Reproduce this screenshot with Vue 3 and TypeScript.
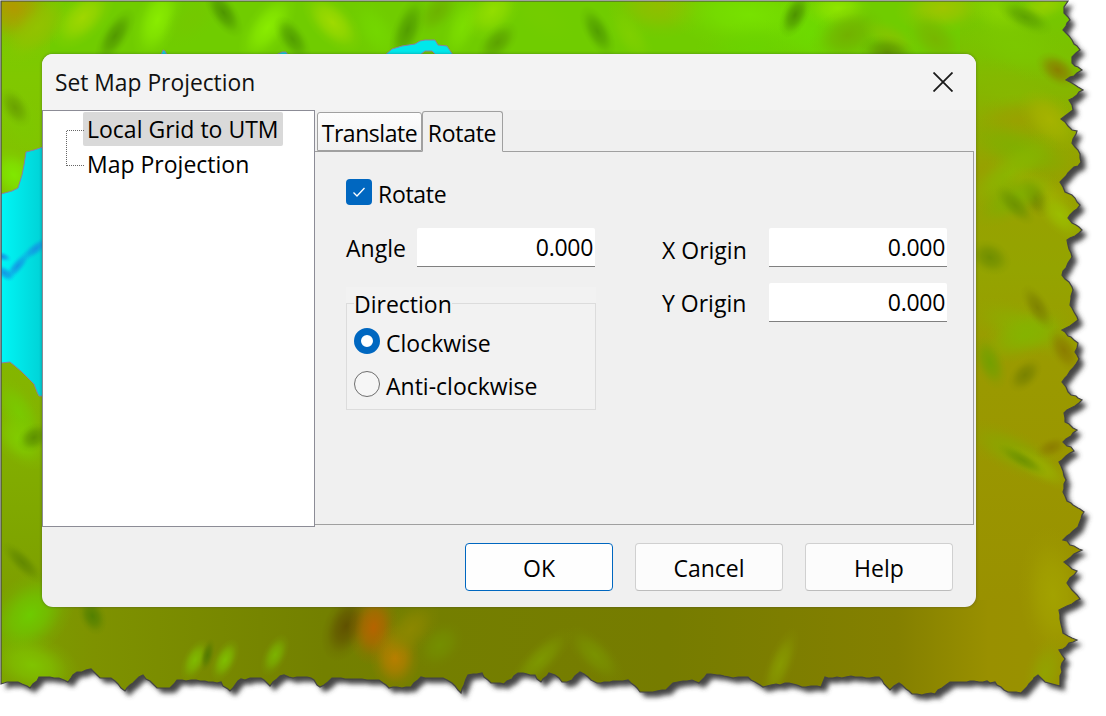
<script setup lang="ts">
import { computed } from 'vue'

type Pt = [number, number]

const right: Pt[] = [[1068,1],[1064,7],[1064,13],[1070,20],[1063,30],[1072,40],[1080,50],[1072,57],[1072,63],[1082,70],[1066,80],[1083,90],[1069,100],[1073,110],[1061,119],[1072,130],[1077,131],[1072,143],[1078,150],[1081,162],[1068,173],[1060,182],[1065,192],[1072,195],[1080,205],[1068,218],[1072,223],[1082,230],[1067,240],[1072,257],[1062,275],[1072,287],[1073,290],[1070,305],[1078,320],[1062,330],[1078,343],[1075,352],[1079,359],[1073,368],[1062,382],[1068,392],[1082,400],[1064,413],[1065,422],[1077,430],[1063,442],[1074,451],[1059,462],[1066,480],[1063,492],[1067,501],[1084,512],[1078,527],[1063,540],[1082,550],[1064,562],[1077,571],[1067,583],[1080,599],[1059,610],[1063,633],[1077,640],[1059,650],[1065,659],[1062,663],[1060,686]]
const bottom: Pt[] = [[1045,682],[1038,675],[1021,693],[1008,692],[995,682],[950,682],[935,694],[912,694],[899,683],[890,690],[879,677],[825,677],[821,687],[802,687],[789,683],[763,687],[748,677],[729,677],[707,674],[699,683],[692,680],[673,683],[666,690],[640,692],[628,680],[617,681],[597,683],[591,680],[580,672],[572,680],[562,682],[555,675],[549,673],[541,682],[535,675],[518,673],[504,684],[491,683],[482,673],[468,675],[461,693],[452,683],[443,678],[421,677],[411,687],[389,688],[379,680],[332,678],[320,687],[311,678],[280,676],[270,686],[261,678],[241,679],[230,691],[221,682],[200,681],[177,680],[170,688],[157,688],[143,675],[125,691],[111,678],[100,678],[91,669],[77,672],[68,682],[59,678],[39,677],[30,688],[18,682],[7,682],[1,684]]

function roughen(points: Pt[]): Pt[] {
  const out: Pt[] = []
  let seed = 17
  const rnd = () => {
    seed = (seed * 9301 + 49297) % 233280
    return seed / 233280
  }
  for (let i = 0; i < points.length - 1; i++) {
    const [ax, ay] = points[i]
    const [bx, by] = points[i + 1]
    const steps = Math.max(1, Math.floor(Math.hypot(bx - ax, by - ay) / 4))
    out.push([ax, ay])
    for (let s = 1; s < steps; s++) {
      const t = s / steps
      out.push([Math.round(ax + (bx - ax) * t + (rnd() - 0.5) * 1.6), Math.round(ay + (by - ay) * t + (rnd() - 0.5) * 1.6)])
    }
  }
  out.push(points[points.length - 1])
  return out
}

const outline = computed<Pt[]>(() => [[1, 1] as Pt, ...roughen(right), ...roughen(bottom)])
const edge = computed(() => outline.value.map((p) => p.join(',')).join(' '))
const tornClip = computed(() => `polygon(${outline.value.map((p) => `${p[0]}px ${p[1]}px`).join(', ')})`)

type Streak = [number, number, number, number, number, string]
const streaks: Streak[] = [
  [0,0,25,14,24,'#b89400'],[20,45,55,10,14,'#92c400'],[70,30,95,5,13,'#a4d800'],[105,52,125,20,8,'#4f9400'],
  [150,40,165,0,13,'#8cf000'],[180,30,205,8,12,'#74c800'],[215,0,232,25,8,'#4a9000'],[255,45,280,10,12,'#8cf000'],
  [285,28,300,50,8,'#4f9a00'],[320,10,345,35,12,'#a4dc00'],[368,18,385,45,12,'#74d800'],[400,50,415,10,9,'#4f9800'],
  [430,20,445,2,10,'#6cb000'],[455,45,470,8,10,'#7ee000'],[485,18,500,4,14,'#96e000'],[490,50,505,35,9,'#5a9e00'],
  [530,8,555,25,13,'#74cc00'],[590,18,605,45,8,'#4f9a00'],[640,5,680,5,20,'#94bc00'],[620,20,640,50,10,'#80d000'],
  [700,10,800,20,22,'#78e400'],[720,50,790,45,16,'#6ad400'],[800,30,830,40,22,'#6cdc00'],[800,5,790,25,8,'#4a8c00'],
  [825,8,850,8,13,'#92e800'],[835,40,860,30,16,'#72ae00'],[875,30,905,45,9,'#86c400'],[920,10,965,6,15,'#a4c400'],
  [875,50,900,54,10,'#5e8e00'],[925,30,945,48,13,'#78b400'],
  [985,5,1010,20,14,'#8ad400'],[1030,10,1060,0,10,'#98d000'],[1040,25,1010,10,8,'#5a9e00'],[990,35,1040,55,18,'#7cc800'],
  [980,75,1060,115,16,'#86b800'],[1050,65,1065,75,9,'#8a7a00'],[990,125,1050,115,16,'#9aa000'],[1040,110,1060,130,14,'#a8b400'],
  [980,135,1060,165,15,'#7eb000'],[1040,150,980,195,13,'#88b800'],[1020,180,1060,200,11,'#a0b000'],[1030,190,1040,205,8,'#6c7c00'],
  [990,210,1040,185,13,'#7cb000'],[1005,195,1025,215,7,'#6c9000'],[1050,205,1070,225,10,'#9cc000'],[985,255,995,260,10,'#6c8c00'],
  [990,315,1060,340,14,'#8ab000'],[1000,345,1050,325,14,'#84b400'],[1030,295,1045,320,7,'#7c8000'],[1020,380,1030,370,8,'#768000'],
  [985,350,995,375,9,'#70a000'],[1058,340,1070,360,8,'#8a7a00'],
  [980,435,1050,470,13,'#88a800'],[1020,455,1060,480,8,'#9ab000'],[1005,450,1040,470,5,'#6c9000'],[1045,450,1058,445,6,'#8a7c00'],
  [1056,630,1050,560,20,'#a4a400'],[1040,690,1050,655,12,'#92a400'],[770,690,790,640,8,'#889c00'],
  [520,680,560,640,9,'#7e9a00'],[610,670,580,640,10,'#7a9400'],[40,605,20,625,22,'#6cd000'],[15,660,50,670,18,'#80c800'],[90,610,95,622,8,'#4e7e00'],
  [190,670,200,650,7,'#80c000'],[220,670,230,650,7,'#80c400'],[205,665,210,645,4,'#4f7800'],[270,665,280,645,7,'#7cb800'],
  [352,612,340,640,13,'#5e4c00'],[375,615,372,640,15,'#bd6000'],[395,665,395,650,15,'#c07e00'],[400,640,420,620,13,'#8e8800'],[435,650,445,640,12,'#749000'],
  [15,110,30,135,14,'#7ec800'],[10,170,18,180,14,'#80ec00'],[8,395,30,430,12,'#78cc00'],[10,430,30,450,13,'#80d000'],[30,440,38,435,8,'#5a8c00'],[10,550,35,575,6,'#608600'],[10,100,20,115,8,'#689e00'],
]
const streamPieces: Streak[] = [
  [46,241,26,256,4,'#1490e4'],[26,256,9,276,4,'#1490e4'],[9,276,0,270,4,'#1490e4'],[-2,255,7,258,3,'#1490e4'],
]

function soften(list: Streak[], prefix: string) {
  return list.map((s, i) => {
    const [x1, y1, x2, y2, w, color] = s
    const pad = w * 1.7
    return {
      id: `${prefix}${i}`,
      color,
      cx: (x1 + x2) / 2,
      cy: (y1 + y2) / 2,
      rx: Math.hypot(x2 - x1, y2 - y1) / 2 + pad,
      ry: pad,
      angle: (Math.atan2(y2 - y1, x2 - x1) * 180) / Math.PI,
    }
  })
}
const blobs = soften(streaks, 'relief')
const streamBlobs = soften(streamPieces, 'stream')
</script>

<template>
  <div class="page">
    <svg class="map" width="1106" height="716" viewBox="0 0 1106 716" aria-hidden="true">
      <defs>
        <filter id="shade" x="-5%" y="-5%" width="110%" height="110%"><feGaussianBlur stdDeviation="2.4" /></filter>
      </defs>
      <polygon class="tear-shadow" :points="edge" filter="url(#shade)" />
    </svg>

    <div class="terrain" :style="{ clipPath: tornClip }">
      <svg class="layer" width="1106" height="716" viewBox="0 0 1106 716" aria-hidden="true">
        <defs>
          <linearGradient id="eastern" x1="0" y1="0" x2="0" y2="1">
            <stop offset="0" stop-color="#70cc00" /><stop offset="0.12" stop-color="#7cc000" /><stop offset="0.2" stop-color="#8ab000" />
            <stop offset="0.3" stop-color="#98a000" /><stop offset="0.45" stop-color="#94a400" />
            <stop offset="0.6" stop-color="#9a9a00" /><stop offset="1" stop-color="#999000" />
          </linearGradient>
          <linearGradient id="southern" x1="0" y1="0" x2="1" y2="0">
            <stop offset="0" stop-color="#7ca400" /><stop offset="0.1" stop-color="#7e9200" />
            <stop offset="0.3" stop-color="#738000" /><stop offset="0.6" stop-color="#767c00" />
            <stop offset="0.8" stop-color="#848000" /><stop offset="0.88" stop-color="#999000" /><stop offset="1" stop-color="#999400" />
          </linearGradient>
          <linearGradient id="western" x1="0" y1="0" x2="0" y2="1">
            <stop offset="0" stop-color="#70cc00" /><stop offset="0.15" stop-color="#80c800" /><stop offset="0.65" stop-color="#84b400" />
            <stop offset="1" stop-color="#7c9c00" />
          </linearGradient>
          <radialGradient v-for="b in [...blobs, ...streamBlobs]" :id="b.id" :key="b.id">
            <stop offset="0" :stop-color="b.color" stop-opacity="0.9" />
            <stop offset="0.4" :stop-color="b.color" stop-opacity="0.6" />
            <stop offset="0.75" :stop-color="b.color" stop-opacity="0.15" />
            <stop offset="1" :stop-color="b.color" stop-opacity="0" />
          </radialGradient>
          <linearGradient id="lake-fill" x1="0" y1="0" x2="1" y2="0">
            <stop offset="0" stop-color="#00f6f6" /><stop offset="1" stop-color="#00d2d6" />
          </linearGradient>
        </defs>
        <rect x="-20" y="-20" width="1146" height="86" fill="#70cc00" />
        <rect x="-20" y="-20" width="70" height="640" fill="url(#western)" />
        <rect x="960" y="-20" width="160" height="640" fill="url(#eastern)" />
        <rect x="-20" y="600" width="1146" height="136" fill="url(#southern)" />
        <ellipse
          v-for="b in blobs"
          :key="b.id"
          :cx="b.cx"
          :cy="b.cy"
          :rx="b.rx"
          :ry="b.ry"
          :fill="`url(#${b.id})`"
          :transform="`rotate(${b.angle} ${b.cx} ${b.cy})`"
        />
        <polygon class="lake" fill="url(#lake-fill)" points="43,147 34,150 26,152 24,165 22,175 18,188 12,191 1,194 1,363 10,362 15,366 22,372 28,378 34,384 37,392 39,396 43,396" />
        <polygon class="lake" fill="#00e8ea" points="385,55 392,49 402,46 415,44 420,41 425,40 435,40 438,45 447,46 453,55" />
        <polygon class="lake" fill="#6fc400" points="420,55 425,51 432,51 436,55" />
        <polygon class="lake" fill="#00d8dc" points="161,55 163,50 165,51 167,55" />
        <polygon class="lake" fill="#00d8dc" points="276,55 282,52 286,52 288,55" />
        <ellipse
          v-for="b in streamBlobs"
          :key="b.id"
          :cx="b.cx"
          :cy="b.cy"
          :rx="b.rx"
          :ry="b.ry"
          :fill="`url(#${b.id})`"
          :transform="`rotate(${b.angle} ${b.cx} ${b.cy})`"
        />
      </svg>
    </div>

    <svg class="map" width="1106" height="716" viewBox="0 0 1106 716" aria-hidden="true">
      <polygon class="tear-line" :points="edge" />
    </svg>

    <section class="dialog">
      <header class="titlebar">
        <span class="title">Set Map Projection</span>
        <svg class="close" width="20" height="20" viewBox="0 0 20 20" aria-hidden="true">
          <path d="M0.5 0.5 L19.5 19.5 M19.5 0.5 L0.5 19.5" />
        </svg>
      </header>

      <div class="main">
        <aside class="tree">
          <svg class="tree-lines" width="22" height="38" viewBox="0 0 22 38" shape-rendering="crispEdges" aria-hidden="true">
            <path d="M0.5 1.5 H19 M0.5 1.5 V36.5 M0.5 36.5 H19" />
          </svg>
          <div class="node selected">Local Grid to UTM</div>
          <div class="node">Map Projection</div>
        </aside>

        <div class="tabs">
          <div class="tabstrip">
            <div class="tab">Translate</div>
            <div class="tab active">Rotate</div>
          </div>
          <div class="panel">
            <label class="check-row">
              <span class="checkbox">
                <svg width="14" height="12" viewBox="0 0 14 12" aria-hidden="true"><path d="M1.5 6.5 L5 10 L12.5 2" /></svg>
              </span>
              <span class="tight">Rotate</span>
            </label>

            <div class="columns">
              <div class="col-left">
                <div class="field">
                  <span class="lbl angle">Angle</span>
                  <div class="input">0.000</div>
                </div>
                <div class="group">
                  <div class="frame">
                    <div class="legend">Direction</div>
                    <div class="radio-row">
                      <span class="radio on"></span>
                      <span class="radio-text">Clockwise</span>
                    </div>
                    <div class="radio-row second">
                      <span class="radio"></span>
                      <span class="radio-text">Anti-clockwise</span>
                    </div>
                  </div>
                </div>
              </div>

              <div class="col-right">
                <div class="field">
                  <span class="lbl origin x">X Origin</span>
                  <div class="input">0.000</div>
                </div>
                <div class="field">
                  <span class="lbl origin">Y Origin</span>
                  <div class="input">0.000</div>
                </div>
              </div>
            </div>
          </div>
        </div>
      </div>

      <footer class="footer">
        <button class="btn primary">OK</button>
        <button class="btn">Cancel</button>
        <button class="btn">Help</button>
      </footer>
    </section>
  </div>
</template>

<style scoped>
.page {
  position: relative;
  width: 1106px;
  height: 716px;
  overflow: hidden;
  background: #fff;
  font-family: "Open Sans", "Noto Sans", sans-serif;
  font-size: 23px;
  color: #000;
}
.map {
  position: absolute;
  left: 0;
  top: 0;
}
.terrain {
  position: absolute;
  left: 0;
  top: 0;
  width: 1106px;
  height: 716px;
  overflow: hidden;
}
.layer {
  position: absolute;
  left: 0;
  top: 0;
}
.tear-shadow {
  fill: #444;
  transform: translate(5px, 5px);
}
.tear-line {
  fill: none;
  stroke: #454545;
  stroke-width: 1.2;
}
.lake {
  stroke: #8a80a0;
  stroke-width: 1;
}
.dialog {
  position: absolute;
  left: 42px;
  top: 54px;
  width: 934px;
  height: 553px;
  box-sizing: border-box;
  background: #f0f0f0;
  border-radius: 11px;
  box-shadow: 0 0 3px rgba(40, 40, 60, 0.45);
  overflow: hidden;
}
.titlebar {
  height: 56px;
  box-sizing: border-box;
  padding: 0 23px 0 13px;
  background: #f3f3f3;
  display: flex;
  align-items: center;
  justify-content: space-between;
}
.title {
  color: #111;
  font-size: 22.8px;
  padding-top: 1px;
}
.close path {
  fill: none;
  stroke: #1a1a1a;
  stroke-width: 1.8;
}
.main {
  display: flex;
  height: 417px;
}
.tree {
  position: relative;
  width: 273px;
  height: 417px;
  box-sizing: border-box;
  background: #fff;
  border: 1px solid #8c8c96;
  padding: 1px 0 0 40px;
}
.tree-lines {
  position: absolute;
  left: 23px;
  top: 18px;
}
.tree-lines path {
  fill: none;
  stroke: #666;
  stroke-width: 1;
  stroke-dasharray: 1 1;
}
.node {
  width: 200px;
  height: 34px;
  line-height: 34px;
  padding-left: 4px;
  box-sizing: border-box;
  white-space: nowrap;
  margin-bottom: 1px;
}
.selected {
  background: #d9d9d9;
  border-radius: 2px;
}
.tabs {
  width: 659px;
  display: flex;
  flex-direction: column;
}
.tabstrip {
  height: 41px;
  display: flex;
  align-items: flex-end;
  padding-left: 2px;
  position: relative;
  z-index: 1;
}
.tab {
  width: 105px;
  height: 39px;
  box-sizing: border-box;
  border: 1px solid #a0a0a0;
  border-radius: 3px 3px 0 0;
  background: linear-gradient(#fdfdfd, #f1f1f1);
  text-align: center;
  line-height: 41px;
  white-space: nowrap;
  letter-spacing: -0.45px;
}
.tab.active {
  width: 81px;
  height: 41px;
  margin-bottom: -1px;
  background: #f0f0f0;
  border-bottom: 1px solid #f0f0f0;
  line-height: 42px;
  letter-spacing: -0.3px;
  padding-right: 1px;
}
.tight {
  letter-spacing: -0.3px;
  padding-top: 3px;
}
.panel {
  height: 374px;
  box-sizing: border-box;
  border: 1px solid #a0a0a0;
  border-left: 0;
  padding: 27px 0 0 31px;
}
.check-row {
  display: flex;
  align-items: center;
  gap: 6px;
  height: 26px;
}
.checkbox {
  width: 26px;
  height: 26px;
  border-radius: 4px;
  background: #0067c0;
  display: flex;
  align-items: center;
  justify-content: center;
}
.checkbox path {
  fill: none;
  stroke: #fff;
  stroke-width: 1.3;
}
.columns {
  display: flex;
  gap: 66px;
  margin-top: 23px;
}
.col-left {
  width: 250px;
}
.col-right {
  display: flex;
  flex-direction: column;
  gap: 16px;
}
.field {
  display: flex;
  align-items: center;
}
.lbl.angle {
  width: 71px;
  box-sizing: border-box;
}
.lbl.origin {
  width: 107px;
  box-sizing: border-box;
}
.lbl.origin.x {
  padding-top: 4px;
}
.input {
  width: 178px;
  height: 39px;
  box-sizing: border-box;
  background: #fff;
  border-bottom: 1px solid #808080;
  border-radius: 2px 2px 0 0;
  text-align: right;
  line-height: 38px;
  padding-right: 2px;
  letter-spacing: -0.3px;
}
.group {
  margin-top: 20px;
  height: 123px;
  width: 250px;
  box-sizing: border-box;
  background: #f2f2f2;
  padding-top: 16px;
}
.frame {
  position: relative;
  height: 107px;
  box-sizing: border-box;
  border: 1px solid #dcdcdc;
  padding: 24px 0 0 7px;
}
.legend {
  position: absolute;
  left: 7px;
  top: -14px;
  height: 28px;
  line-height: 28px;
  background: #f2f2f2;
}
.radio-row {
  display: flex;
  align-items: center;
  gap: 6px;
  height: 26px;
}
.radio-row.second {
  margin-top: 17px;
}
.radio-text {
  padding-top: 3px;
}
.radio {
  width: 26px;
  height: 26px;
  box-sizing: border-box;
  border-radius: 50%;
  border: 1.5px solid #6e6e6e;
  background: #f6f6f6;
}
.radio.on {
  border: 7px solid #0067c0;
  background: #fff;
}
.footer {
  display: flex;
  justify-content: flex-end;
  gap: 22px;
  padding: 16px 23px 0 0;
}
.btn {
  width: 148px;
  height: 48px;
  box-sizing: border-box;
  border: 1px solid #d0d0d0;
  border-bottom-color: #bcbcbc;
  border-radius: 4px;
  background: #fcfcfc;
  font: inherit;
  color: #000;
  padding: 2px 0 0;
}
.btn.primary {
  border: 1px solid #0067c0;
  background: #fefefe;
}
</style>
